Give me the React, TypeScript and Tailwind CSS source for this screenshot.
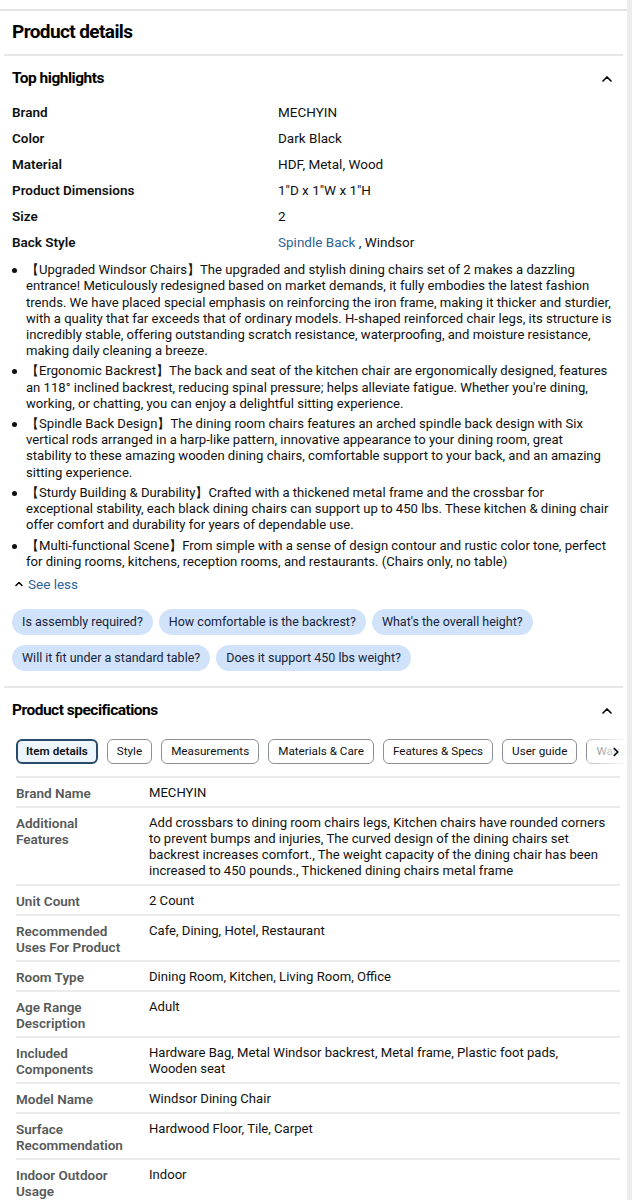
import { ChevronUp, ChevronRight } from 'lucide-react';

const FONT = { fontFamily: 'Roboto, "Noto Sans", Arial, sans-serif' };

const HIGHLIGHTS: [string, string][] = [
  ['Brand', 'MECHYIN'],
  ['Color', 'Dark Black'],
  ['Material', 'HDF, Metal, Wood'],
  ['Product Dimensions', '1"D x 1"W x 1"H'],
  ['Size', '2'],
];

// newline keeps "stability" on the third line of the spindle bullet
const BULLETS = [
  '【Upgraded Windsor Chairs】The upgraded and stylish dining chairs set of 2 makes a dazzling entrance! Meticulously redesigned based on market demands, it fully embodies the latest fashion trends. We have placed special emphasis on reinforcing the iron frame, making it thicker and sturdier, with a quality that far exceeds that of ordinary models. H-shaped reinforced chair legs, its structure is incredibly stable, offering outstanding scratch resistance, waterproofing, and moisture resistance, making daily cleaning a breeze.',
  '【Ergonomic Backrest】The back and seat of the kitchen chair are ergonomically designed, features an 118° inclined backrest, reducing spinal pressure; helps alleviate fatigue. Whether you\'re dining, working, or chatting, you can enjoy a delightful sitting experience.',
  '【Spindle Back Design】The dining room chairs features an arched spindle back design with Six vertical rods arranged in a harp-like pattern, innovative appearance to your dining room, great\nstability to these amazing wooden dining chairs, comfortable support to your back, and an amazing sitting experience.',
  '【Sturdy Building & Durability】Crafted with a thickened metal frame and the crossbar for exceptional stability, each black dining chairs can support up to 450 lbs. These kitchen & dining chair offer comfort and durability for years of dependable use.',
  '【Multi-functional Scene】From simple with a sense of design contour and rustic color tone, perfect for dining rooms, kitchens, reception rooms, and restaurants. (Chairs only, no table)',
];

const QUESTIONS = [
  'Is assembly required?',
  'How comfortable is the backrest?',
  "What's the overall height?",
  'Will it fit under a standard table?',
  'Does it support 450 lbs weight?',
];

const TABS = ['Item details', 'Style', 'Measurements', 'Materials & Care', 'Features & Specs', 'User guide', 'Warranty'];

const SPECS: [string, string][] = [
  ['Brand Name', 'MECHYIN'],
  ['Additional Features', 'Add crossbars to dining room chairs legs, Kitchen chairs have rounded corners to prevent bumps and injuries, The curved design of the dining chairs set backrest increases comfort., The weight capacity of the dining chair has been increased to 450 pounds., Thickened dining chairs metal frame'],
  ['Unit Count', '2 Count'],
  ['Recommended Uses For Product', 'Cafe, Dining, Hotel, Restaurant'],
  ['Room Type', 'Dining Room, Kitchen, Living Room, Office'],
  ['Age Range Description', 'Adult'],
  ['Included Components', 'Hardware Bag, Metal Windsor backrest, Metal frame, Plastic foot pads, Wooden seat'],
  ['Model Name', 'Windsor Dining Chair'],
  ['Surface Recommendation', 'Hardwood Floor, Tile, Carpet'],
  ['Indoor Outdoor Usage', 'Indoor'],
];

const SectionHeader = ({ title }: { title: string }) => (
  <div className="flex items-center justify-between pl-3 pr-3">
    <h3 className="text-[15.5px] font-bold tracking-[-0.5px] text-black">{title}</h3>
    <ChevronUp className="w-4 h-4 text-black" strokeWidth={2.5} />
  </div>
);

const App = () => {
  return (
    <div className="flex w-[632px] min-h-[1200px] bg-white text-[#0f1111]" style={FONT}>
      <div className="w-[627px] overflow-hidden">
        <div className="h-[11px] border-b-2 border-[#e3e3e3]" />

        <h2 className="px-3 pt-[10px] pb-[11px] text-[19px] font-bold tracking-[-0.6px] text-black leading-[22px]">
          Product details
        </h2>
        <div className="mx-1 border-t-2 border-[#e7e7e7]" />

        {/* Top highlights */}
        <div className="pt-[11px]">
          <SectionHeader title="Top highlights" />
          <div className="mt-[14px] px-3 flex flex-col gap-[10px] text-[13.5px] leading-[16px]">
            {HIGHLIGHTS.map(([k, v]) => (
              <div key={k} className="flex">
                <div className="w-[266px] font-semibold">{k}</div>
                <div>{v}</div>
              </div>
            ))}
            <div className="flex">
              <div className="w-[266px] font-semibold">Back Style</div>
              <div>
                <span className="text-[#2f6497]">Spindle Back</span> , Windsor
              </div>
            </div>
          </div>

          <ul className="mt-[12px] pr-[13px] flex flex-col gap-[4px] text-[13.1px] leading-[16.2px]">
            {BULLETS.map(b => (
              <li key={b.slice(0, 20)} className="flex">
                <span className="w-[26px] shrink-0 flex justify-center pt-[6px] pl-[2px]">
                  <span className="w-[5px] h-[5px] rounded-full bg-[#0f1111]" />
                </span>
                <span className="whitespace-pre-line">{b}</span>
              </li>
            ))}
          </ul>

          <div className="mt-[4px] pl-[13px] flex items-center gap-[3px] text-[13.5px] text-[#2f6497]">
            <ChevronUp className="w-3 h-3 text-black" strokeWidth={3} />
            <span>See less</span>
          </div>

          <div className="mt-[15px] px-3 flex flex-wrap gap-x-[6px] gap-y-[10px]">
            {QUESTIONS.map(q => (
              <span key={q} className="h-[26px] px-[10px] rounded-full bg-[#d1e3fa] text-[12.5px] leading-[26px] text-[#16233a]">
                {q}
              </span>
            ))}
          </div>
        </div>

        <div className="mt-[15px] mx-1 border-t-2 border-[#e7e7e7]" />

        {/* Product specifications */}
        <div className="pt-[11px]">
          <SectionHeader title="Product specifications" />

          <div className="relative mt-[17px] pl-4 flex gap-[9px] overflow-hidden whitespace-nowrap">
            {TABS.map((t, i) => (
              <span
                key={t}
                className={
                  i === 0
                    ? 'h-[25px] px-[8px] rounded-[6px] border-2 border-[#2a4a6b] bg-[#edf5fd] text-[11.7px] font-semibold leading-[21px]'
                    : 'h-[25px] px-[9px] rounded-[6px] border border-[#8d9096] text-[11.7px] leading-[23px] text-[#0f1111]'
                }
              >
                {t}
              </span>
            ))}
            <div className="absolute right-0 top-0 h-[25px] w-[40px] flex items-center justify-end bg-gradient-to-r from-white/40 via-white/70 to-white pr-[4px]">
              <ChevronRight className="w-[14px] h-[14px] text-black" strokeWidth={3} />
            </div>
          </div>

          <div className="mt-[12px] ml-4 mr-[7px] border-t-2 border-[#ebebeb]">
            {SPECS.map(([k, v]) => (
              <div key={k} className="flex border-b-2 border-[#ebebeb] pt-[7px] pb-[5px] leading-[16px]">
                <div className="w-[133px] shrink-0 pr-[20px] text-[13.5px] font-semibold text-[#565959]">{k}</div>
                <div className="pr-[14px] text-[13.1px]">{v}</div>
              </div>
            ))}
          </div>
        </div>
      </div>
      <div className="w-[5px] bg-[#ececec]" />
    </div>
  );
};

export default App;
